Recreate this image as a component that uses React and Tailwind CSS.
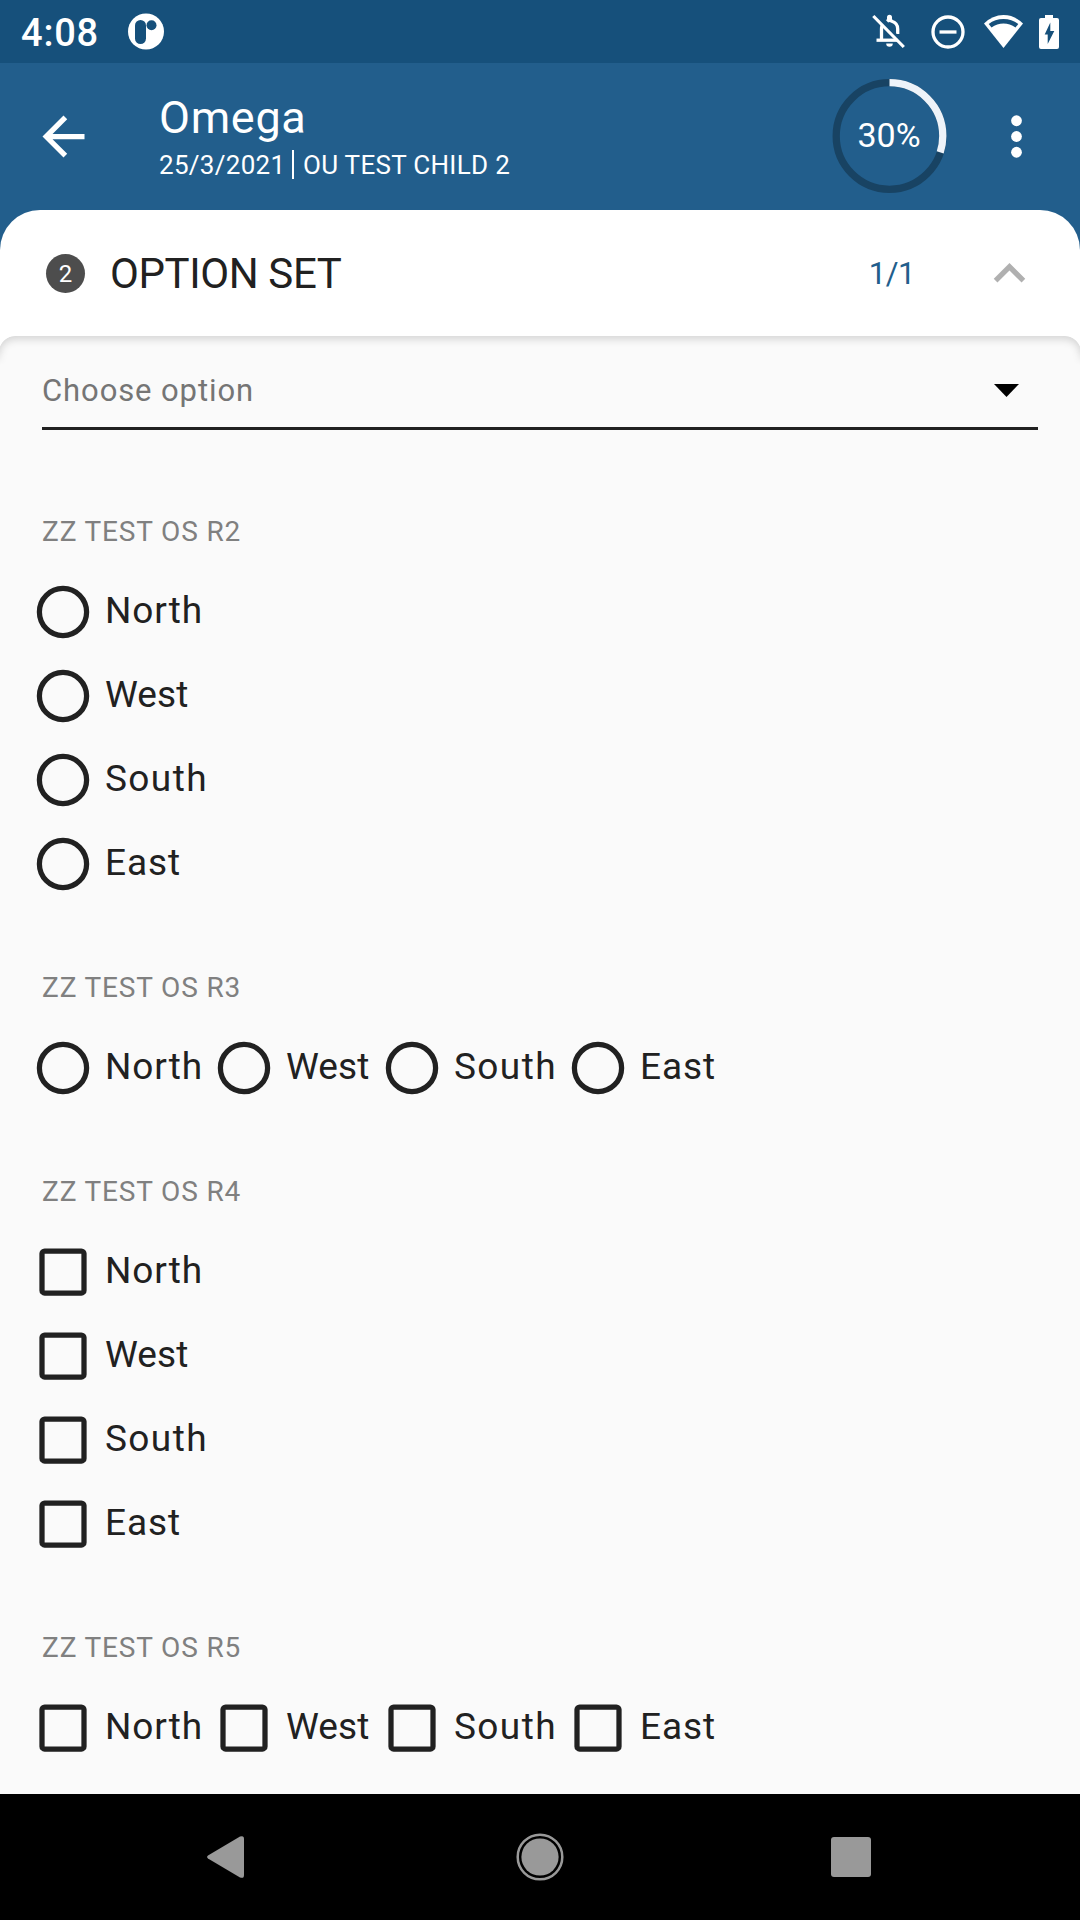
const NAMES = ["North", "West", "South", "East"];

// Text cell widths and tracking for each option label
const LABEL_STYLE = {
  North: "w-[97px] tracking-[0.9px]",
  West: "w-[84px] tracking-[0.1px]",
  South: "w-[102px] tracking-[1.4px]",
  East: "w-[78px] tracking-[0.9px]",
};

function Radio() {
  return (
    <svg width="84" height="84" viewBox="0 0 84 84" fill="none">
      <circle cx="42" cy="42" r="23.600" stroke="#212121" strokeWidth="5.250" />
    </svg>
  );
}

function Checkbox() {
  return (
    <svg width="84" height="84" viewBox="0 0 84 84" fill="none">
      <rect x="21" y="21" width="42" height="42" rx="2.600" stroke="#212121" strokeWidth="5.250" />
    </svg>
  );
}

function Option({ name, type }) {
  return (
    <div className="flex h-[84px] shrink-0 items-center">
      {type === "radio" ? <Radio /> : <Checkbox />}
      <span className={"mt-[-2px] whitespace-nowrap text-[37px] leading-[44px] text-[#212121] " + LABEL_STYLE[name]}>
        {name}
      </span>
    </div>
  );
}

function Question({ title, type, inline }) {
  return (
    <section>
      <h2 className="flex h-[78px] items-center pl-[21px] pt-[2px] text-[28px] leading-none tracking-[0.850px] text-[#808080]">
        {title}
      </h2>
      <div className={inline ? "flex" : "flex flex-col"}>
        {NAMES.map((n) => (
          <Option key={n} name={n} type={type} />
        ))}
      </div>
    </section>
  );
}

function StatusBar() {
  return (
    <div className="flex h-[63px] shrink-0 items-center bg-[#16507b] pl-[21px] pr-[21px] text-white">
      <span className="mt-[3px] w-[107px] text-[38px] font-medium leading-none tracking-[0.8px]">4:08</span>
      <svg width="36" height="37" viewBox="0 0 36 37">
        <circle cx="18" cy="18.500" r="18" fill="white" />
        <rect x="7" y="7" width="11" height="24" rx="5.500" fill="#16507b" />
        <circle cx="23.500" cy="12.200" r="5" fill="#16507b" />
      </svg>
      <div className="ml-auto flex items-center">
        <svg width="34" height="35" viewBox="0 0 34 35" className="mr-[25px]" fill="none">
          <path d="M9.500 26V15q0-2 .7-3.600M15 7.300Q17.500 5 20 7.300Q25.700 9.200 25.700 15v5" stroke="white" strokeWidth="3.300" />
          <path d="M17.500.8a2.500 2.500 0 0 1 2.500 2.500v3h-5v-3a2.500 2.500 0 0 1 2.500-2.500M14.200 29.500h6.600a3.300 3.300 0 0 1-6.600 0" fill="white" />
          <path d="M4.500 26.200h21" stroke="white" strokeWidth="3.300" />
          <path d="M3.500 0.600 34 31" stroke="#16507b" strokeWidth="2.500" />
          <path d="M1.300 2 31.800 33" stroke="white" strokeWidth="3.200" />
        </svg>
        <svg width="34" height="34" viewBox="0 0 34 34" className="mr-[19px]" fill="none" stroke="white" strokeWidth="3.300">
          <circle cx="17" cy="17" r="15" />
          <path d="M8.500 17h17" />
        </svg>
        <svg width="39" height="34" viewBox="0 0 39 34" className="mr-[16px]" fill="none">
          <path d="M0 8.500Q8.500 0 19.500 0T39 8.500L19.500 33Z" fill="white" />
          <path d="M4.700 9Q11 4 19.500 4T34.300 9L31.500 12.500Q26 8.500 19.500 8.500T7.500 12.500Z" fill="#16507b" />
        </svg>
        <svg width="20" height="34" viewBox="0 0 20 34">
          <path d="M6 0h8v3h4a2 2 0 0 1 2 2v27a2 2 0 0 1-2 2H2a2 2 0 0 1-2-2V5a2 2 0 0 1 2-2h4Z" fill="white" />
          <path d="M11.300 7.500V16h4L8.700 29v-9.500h-3Z" fill="#16507b" />
        </svg>
      </div>
    </div>
  );
}

function AppBar() {
  return (
    <header className="flex h-[147px] shrink-0 items-center bg-[#225e8c] pl-[32px] pr-[32px] text-white">
      <svg width="63" height="63" viewBox="0 0 24 24" fill="white">
        <path d="M20 11H7.830l5.590-5.590L12 4l-8 8 8 8 1.410-1.410L7.830 13H20v-2z" />
      </svg>
      <div className="ml-[64px] flex flex-col">
        <h1 className="text-[45px] leading-[52px] tracking-[0.700px]">Omega</h1>
        <div className="mt-[4px] flex h-[34px] items-center text-[26px] leading-none">
          <span className="w-[133px] tracking-[0.300px]">25/3/2021</span>
          <span className="h-[29px] w-[2px] bg-white" />
          <span className="ml-[9px] whitespace-nowrap tracking-[0.300px]">OU TEST CHILD 2</span>
        </div>
      </div>
      <div className="mb-[2px] ml-auto grid size-[116px] place-items-center">
        <svg width="116" height="116" viewBox="0 0 116 116" fill="none" className="col-start-1 row-start-1">
          <circle cx="57.500" cy="58" r="53.300" stroke="#184363" strokeWidth="7.300" />
          <circle cx="57.500" cy="58" r="53.300" stroke="#eef3f9" strokeWidth="7.300" pathLength="100" strokeDasharray="30 70" transform="rotate(-90 57.500 58)" />
        </svg>
        <span className="col-start-1 row-start-1 pb-[2px] pr-[2px] text-[34px] leading-none">30%</span>
      </div>
      <svg width="63" height="63" viewBox="0 0 24 24" fill="white" className="ml-[37px]">
        <circle cx="12" cy="6" r="2.050" />
        <circle cx="12" cy="12" r="2.050" />
        <circle cx="12" cy="18" r="2.050" />
      </svg>
    </header>
  );
}

function SectionHeader() {
  return (
    <div className="shrink-0 bg-[#225e8c]">
      <div className="flex h-[126px] items-center rounded-t-[40px] bg-white pl-[46px] pr-[39px]">
        <span className="flex size-[39px] items-center justify-center rounded-full bg-[#4d4d4d] pt-[2px] text-[24px] leading-none text-white">2</span>
        <span className="ml-[25px] pt-[1px] text-[42px] leading-none tracking-[-0.400px] text-[#212121]">OPTION SET</span>
        <span className="ml-auto pt-[1px] text-[31px] leading-none tracking-[-0.500px] text-[#225e8c]">1/1</span>
        <svg width="63" height="63" viewBox="0 0 24 24" fill="#b0b0b0" className="ml-[63px]">
          <path d="M12 8l-6 6 1.410 1.410L12 10.830l4.590 4.580L18 14z" />
        </svg>
      </div>
    </div>
  );
}

function NavBar() {
  return (
    <nav className="flex h-[126px] shrink-0 items-center bg-black pl-[207px] pr-[209px]">
      <svg width="37" height="42" viewBox="0 0 37 42" fill="#999">
        <path d="M1 19.500 33 .6Q37-1 37 3v36q0 4-4 2.400L1 22.500Q-.8 21 1 19.500Z" />
      </svg>
      <svg width="48" height="48" viewBox="0 0 48 48" fill="none" className="ml-[272px]">
        <circle cx="24" cy="24" r="22.300" stroke="#999" strokeWidth="2.500" />
        <circle cx="24" cy="24" r="18.600" fill="#999" />
      </svg>
      <span className="ml-auto size-[40px] rounded-[3px] bg-[#999]" />
    </nav>
  );
}

export default function App() {
  return (
    <div className="flex h-[1920px] w-[1080px] flex-col overflow-hidden bg-[#fafafa] font-['Roboto','Noto_Sans',sans-serif]">
      <StatusBar />
      <AppBar />
      <SectionHeader />
      <main className="relative flex-1">
        <div className="absolute inset-x-0 top-0 h-[30px] overflow-hidden bg-white">
          <div className="-mx-[1px] h-[80px] rounded-t-[16px] bg-[#fafafa]">
            <div className="h-full rounded-t-[16px] shadow-[inset_0_3px_8px_rgba(0,0,0,0.16)] [mask-image:linear-gradient(to_bottom,black_16px,transparent_29px)]" />
          </div>
        </div>
        <div className="relative mx-[42px] flex h-[94px] items-center justify-between border-b-[3px] border-[#212121] pr-[19px] pt-[17px]">
          <span className="text-[31px] leading-none tracking-[0.900px] text-[#757575]">Choose option</span>
          <svg width="25" height="13" viewBox="0 0 25 13">
            <path d="M0 0h25L12.500 13Z" />
          </svg>
        </div>
        <div className="flex flex-col gap-[42px] pl-[21px] pt-[62px]">
          <Question title="ZZ TEST OS R2" type="radio" />
          <Question title="ZZ TEST OS R3" type="radio" inline />
          <Question title="ZZ TEST OS R4" type="checkbox" />
          <Question title="ZZ TEST OS R5" type="checkbox" inline />
        </div>
      </main>
      <NavBar />
    </div>
  );
}
